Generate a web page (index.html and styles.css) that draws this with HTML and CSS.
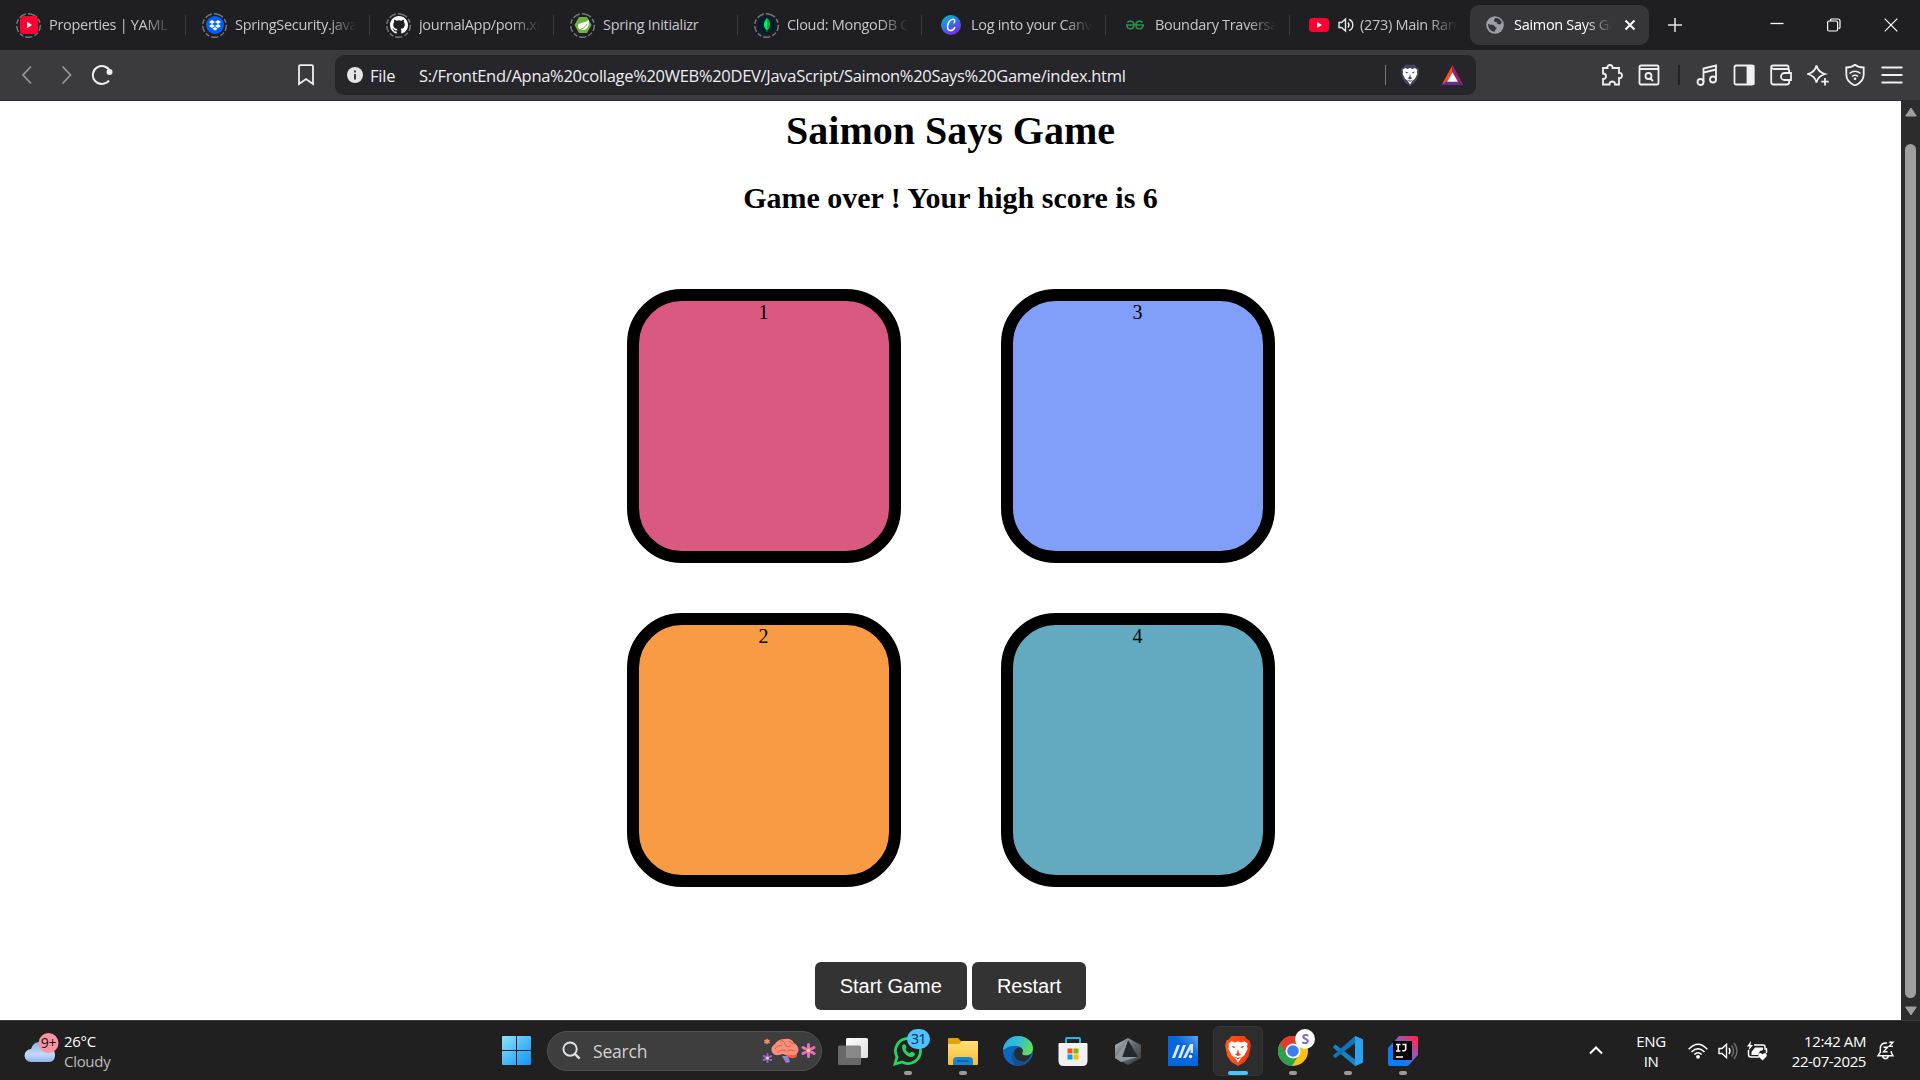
FILE: index.html
```html
<!DOCTYPE html>
<html lang="en">
<head>
<meta charset="utf-8">
<title>Saimon Says Game</title>
<link rel="stylesheet" href="styles.css">
</head>
<body>
<svg width="0" height="0" class="defs" aria-hidden="true">
  <defs>
    <linearGradient id="gWin" x1="0" y1="0" x2="1" y2="1"><stop offset="0" stop-color="#8be4fb"/><stop offset="1" stop-color="#0f93f5"/></linearGradient>
    <linearGradient id="gCanva" x1="0" y1="0" x2="0.6" y2="1"><stop offset="0" stop-color="#00c4cc"/><stop offset="0.5" stop-color="#2a7be4"/><stop offset="1" stop-color="#7d2ae8"/></linearGradient>
    <linearGradient id="gCloud" x1="0" y1="0" x2="0" y2="1"><stop offset="0" stop-color="#7faeee"/><stop offset="0.6" stop-color="#c5d9f8"/><stop offset="1" stop-color="#8fb4ee"/></linearGradient>
    <linearGradient id="gFolder" x1="0" y1="0" x2="0" y2="1"><stop offset="0" stop-color="#ffe07a"/><stop offset="1" stop-color="#f9bd2b"/></linearGradient>
    <linearGradient id="gEdge" x1="0" y1="0.2" x2="1" y2="0.6"><stop offset="0" stop-color="#2fa8e6"/><stop offset="0.5" stop-color="#35c1d0"/><stop offset="1" stop-color="#67e051"/></linearGradient>
    <linearGradient id="gBlue" x1="0" y1="1" x2="1" y2="0"><stop offset="0.6" stop-color="#0566dd"/><stop offset="1" stop-color="#5aa5ef"/></linearGradient>
    <linearGradient id="gBrave" x1="0" y1="0" x2="1" y2="0"><stop offset="0" stop-color="#ff5a1f"/><stop offset="1" stop-color="#f5330b"/></linearGradient>
    <linearGradient id="gIj" x1="0" y1="1" x2="1" y2="0"><stop offset="0.3" stop-color="#087cfa"/><stop offset="0.6" stop-color="#8a5bc4"/><stop offset="0.9" stop-color="#fe2857"/></linearGradient>
    <linearGradient id="gTask" x1="0" y1="0" x2="1" y2="1"><stop offset="0" stop-color="#fff"/><stop offset="1" stop-color="#dedede"/></linearGradient>
    <linearGradient id="gStone" x1="0" y1="0" x2="1" y2="1"><stop offset="0" stop-color="#b9bec5"/><stop offset="0.5" stop-color="#5f666e"/><stop offset="1" stop-color="#343a40"/></linearGradient>
    <symbol id="ring" viewBox="0 0 24 24"><circle cx="12" cy="12" r="11.3" fill="none" stroke="#77777c" stroke-width="1.4" stroke-dasharray="7 2 4 2 6 2 4.5 2"  transform="rotate(-80 12 12)"/></symbol>
    <symbol id="yt" viewBox="0 0 18 18"><rect width="18" height="18" rx="4" fill="#ff0033"/><path d="M7 5.8v6.4l5-3.2z" fill="#fff"/></symbol>
    <symbol id="lion" viewBox="0 0 24 28"><path d="M3 7l3-2 3 1 3-1 3 1 3-1 3 2-.6 3 .6 2-3 6-3 2.4-3 4.6-3-4.6L6 18l-3-6 .6-2z" fill="#fff"/><path d="M6 9l4 1.300-2 1.200zM18 9l-4 1.300 2 1.200zM12 12l1 4 2 1-3 2-3-2 2-1z M8 19l4 1.500 4-1.500-4 3z" fill="currentColor"/></symbol>
  </defs>
</svg>

<header class="tabs">
  <div class="tab">
    <span class="fav"><svg class="ring"><use href="#ring"/></svg><svg class="core"><use href="#yt"/></svg></span>
    <span class="title fade">Properties | YAML | Spring</span>
  </div>
  <div class="tab">
    <span class="fav"><svg class="ring"><use href="#ring"/></svg><svg class="core" viewBox="0 0 18 18"><circle cx="9" cy="9" r="9" fill="#0061fe"/><path d="M6 4l3 2-3 2-3-2zM12 4l3 2-3 2-3-2zM6 8l3 2-3 2-3-2zM12 8l3 2-3 2-3-2zM9 11l2.700 1.700L9 14.400l-2.700-1.700z" fill="#fff"/></svg></span>
    <span class="title fade">SpringSecurity.java - Dropbox</span>
  </div>
  <div class="tab">
    <span class="fav"><svg class="ring"><use href="#ring"/></svg><svg class="core" viewBox="0 0 16 16"><path fill="#fff" d="M8 0C3.580 0 0 3.580 0 8c0 3.540 2.290 6.530 5.470 7.590.4.070.55-.17.55-.38v-1.490c-2.010.37-2.530-.49-2.690-.94-.09-.23-.48-.94-.82-1.130-.28-.15-.68-.52-.01-.53.63-.01 1.080.58 1.230.82.72 1.210 1.870.87 2.330.66.07-.52.28-.87.51-1.070-1.780-.2-3.640-.89-3.640-3.950 0-.87.31-1.590.82-2.150-.08-.2-.36-1.020.08-2.120 0 0 .67-.21 2.200.82a7.600 7.600 0 0 1 4 0c1.530-1.040 2.200-.82 2.200-.82.44 1.100.16 1.920.08 2.120.51.56.82 1.270.82 2.150 0 3.070-1.870 3.750-3.650 3.950.29.25.54.73.54 1.480v2.200c0 .21.15.46.55.38A8 8 0 0 0 16 8c0-4.420-3.580-8-8-8z"/></svg></span>
    <span class="title fade">journalApp/pom.xml at main</span>
  </div>
  <div class="tab">
    <span class="fav"><svg class="ring"><use href="#ring"/></svg><svg class="core" viewBox="0 0 18 18"><path d="M5 1h8l4.500 8L13 17H5L.5 9z" fill="#6db33f"/><path d="M14.500 3.500c1.500 7-2 11-6 10.500-2.500 0-4.500-1.500-4.500-4C4 5.500 12 8 14.500 3.500z" fill="#fff"/><path d="M4 14c4-.5 7-2.500 9-6" stroke="#6db33f" fill="none"/></svg></span>
    <span class="title">Spring Initializr</span>
  </div>
  <div class="tab">
    <span class="fav"><svg class="ring"><use href="#ring"/></svg><svg class="core" viewBox="0 0 18 18"><circle cx="9" cy="9" r="9" fill="#001e2b"/><path d="M9 2c4 4.500 4 9 .3 12v2h-.6v-2C5 11 5 6.500 9 2z" fill="#00ed64"/><path d="M9 2c4 4.500 4 9 .3 12z" fill="#00a849"/></svg></span>
    <span class="title fade">Cloud: MongoDB Cloud</span>
  </div>
  <div class="tab">
    <span class="fav"><svg class="core wide" viewBox="0 0 20 20"><circle cx="10" cy="10" r="10" fill="url(#gCanva)"/><path d="M13 7.800c1.400-1.600.8-3.500-1-3.500-3 0-5.500 4-5.500 7.300 0 2.700 1.300 4 3 4 1.800 0 3.300-1.200 4.200-3" fill="none" stroke="#fff" stroke-width="1.500" stroke-linecap="round"/></svg></span>
    <span class="title fade">Log into your Canva account</span>
  </div>
  <div class="tab">
    <span class="fav"><svg class="core" viewBox="0 0 18 18" fill="none" stroke="#2f8d46" stroke-width="1.600"><path d="M0 9h18M1.200 6.500C4 4 8 5 8 9c0 5-6.800 5-7 .5M16.800 6.500C14 4 10 5 10 9c0 5 6.800 5 7 .5"/></svg></span>
    <span class="title fade">Boundary Traversal of binary</span>
  </div>
  <div class="tab last">
    <span class="fav"><svg class="core wide" viewBox="0 0 20 20"><rect y="3" width="20" height="14" rx="3.500" fill="#ff0033"/><path d="M8 7v6l5-3z" fill="#fff"/></svg></span>
    <svg class="speaker" viewBox="0 0 16 16" fill="none" stroke="#e8e8ea" stroke-width="1.400"><path d="M1 5.500h2.500L7.500 2v12l-4-3.500H1zM10 5.500q2 2.500 0 5M11 2.500c5 1.500 5 9.500 0 11"/></svg>
    <span class="title fade">(273) Main Rang Sharbaton</span>
  </div>
  <div class="tab active">
    <svg class="globe" viewBox="0 0 18 18"><circle cx="9" cy="9" r="8.800" fill="#9aa0a6"/><path d="M9 2.200c3-.5 5.800 1.500 6.800 4.300-1.500 2.500-2 2-4 1.800-1.500-1 0-2-1.600-2.300-2-.3-3-.7-1.200-3.800zM2 8c2 1.200 5.500 0 6.500 2s2 .5 2.200 2.500c-1 .5-1.700 1.500-2 3.200C4.500 15.500 2 12 2 8z" fill="#35353a"/></svg>
    <span class="title fade">Saimon Says Game</span>
    <svg class="close" viewBox="0 0 12 12"><path d="M1.500 1.500l9 9M10.500 1.500l-9 9" stroke="#fff" stroke-width="1.900"/></svg>
  </div>
  <svg class="plus" viewBox="0 0 14 14"><path d="M7 0v14M0 7h14" stroke="#e6e6e8" stroke-width="1.500"/></svg>
  <div class="winctl">
    <svg viewBox="0 0 14 14"><path d="M.5 5.500h13" stroke="#fff" stroke-width="1.300"/></svg>
    <svg viewBox="0 0 14 14" fill="none" stroke="#fff" stroke-width="1.200"><rect x=".6" y="3" width="10" height="10" rx="1.500"/><path d="M3.500 3V2q0-1 1.200-1H11q2 0 2 2v6.500q0 1-1.500 1"/></svg>
    <svg viewBox="0 0 14 14"><path d="M.7.7l12.600 12.600M13.300.7L.7 13.300" stroke="#fff" stroke-width="1.200"/></svg>
  </div>
</header>

<nav class="toolbar">
  <svg class="nav-i dim" viewBox="0 0 20 20"><path d="M13 1.500L5 10l8 8.500"/></svg>
  <svg class="nav-i dim" viewBox="0 0 20 20"><path d="M6.500 1.500l8 8.500-8 8.500"/></svg>
  <svg class="nav-i reload" viewBox="0 0 22 22"><path d="M19.500 8.500A9 9 0 1 0 18 16.500" stroke-width="2"/><circle cx="18.500" cy="8" r="3" fill="#f0f0f2" stroke="none"/></svg>
  <svg class="bookmark" viewBox="0 0 18 22"><path d="M2 2.500q0-1.300 1.300-1.300h11.400Q16 1.200 16 2.500V20l-7-5-7 5z"/></svg>
  <div class="urlbar">
    <svg class="info" viewBox="0 0 16 16"><circle cx="8" cy="8" r="8" fill="#e4e4e9"/><path d="M8 3.500v2M8 7v5.500" stroke="#28272d" stroke-width="1.800"/></svg>
    <span class="scheme">File</span>
    <span class="url">S:/FrontEnd/Apna%20collage%20WEB%20DEV/JavaScript/Saimon%20Says%20Game/index.html</span>
    <i class="bar"></i>
    <svg class="shield" viewBox="0 0 24 28"><path d="M6 1h12l2 3 2.500 1.500L23 9l-2 9-4 5.500-5 4-5-4L3 18 1 9l.5-3.500L4 4z" fill="#44475c"/><use href="#lion"/></svg>
    <svg class="bat" viewBox="0 0 24 22"><path d="M12 0L0 22l5.500-3L12 8z" fill="#ff4724"/><path d="M12 0l12 22-5.500-3L12 8z" fill="#9e1f63"/><path d="M0 22h24l-5.500-4h-13z" fill="#662d91"/><path d="M12 8l6 10.500H6z" fill="#fff"/></svg>
  </div>
  <div class="tools">
    <svg viewBox="0 0 22 22"><path d="M2 4h4.500C5.500 0 12.500 0 11.500 4H18v5c4-1 4 6 0 5v6.500h-4c.5-4-6-4-5.500 0H2v-5.500c4 0 4-5.500 0-5.500z"/></svg>
    <svg viewBox="0 0 22 22"><path d="M3 1.500h16q1.500 0 1.500 1.500v16q0 1.500-1.500 1.500H3q-1.500 0-1.500-1.500V3Q1.500 1.500 3 1.500zM1.500 5h19"/><circle cx="10.500" cy="12" r="3"/><path d="M12.500 14.500l2.500 2.500"/></svg>
    <i class="split"></i>
    <svg viewBox="0 0 22 22"><circle cx="4.500" cy="18" r="3"/><circle cx="17" cy="15.500" r="3"/><path d="M7.500 18V4.500L20 1.500v14M7.500 8.500L20 5.500"/></svg>
    <svg viewBox="0 0 22 22"><rect x="1.500" y="1.500" width="19" height="19" rx="1.500"/><path d="M14.500 2h6v18h-6z" fill="#f0f0f2"/></svg>
    <svg viewBox="0 0 22 22"><path d="M18.500 5V3q0-1.500-1.500-1.500H3Q1.200 1.500 1.200 3.300V18q0 2.500 2.500 2.500h13q2.500 0 2.500-2.500v-2M1.500 3.500Q2 5 4 5h13.200q2 0 2 2v2M21 9h-6.500a3.500 3.500 0 0 0 0 7H21z"/></svg>
    <svg viewBox="0 0 22 22"><path d="M9.500 1.500q1.500 6.500 8.500 8.500-7 2-8.500 8.500Q8 12 1 10q7-2 8.500-8.500zM18 14v7.500M14.300 17.700h7.400"/></svg>
    <svg viewBox="0 0 22 22"><path d="M11 .8c2.500 2 5.500 2.700 8.700 2.700v7c0 5-3.500 8.800-8.700 11-5.200-2.200-8.700-6-8.700-11v-7C5.500 3.500 8.500 2.800 11 .8z"/><path d="M5.500 9.500q5.500-4.500 11 0M8 12.500q3-2.500 6 0" stroke-width="1.600"/><circle cx="11" cy="14.800" r="1.300" fill="#f0f0f2" stroke="none"/></svg>
    <svg viewBox="0 0 22 22"><path d="M.5 3.500h21M.5 11h21M.5 18.500h21"/></svg>
  </div>
</nav>

<main class="viewport">
  <section class="page">
    <h1>Saimon Says Game</h1>
    <h2>Game over ! Your high score is 6</h2>
    <div class="board">
      <div class="pad red">1</div>
      <div class="pad blue">3</div>
      <div class="pad orange">2</div>
      <div class="pad teal">4</div>
    </div>
    <div class="actions"><button>Start Game</button><button>Restart</button></div>
  </section>
  <aside class="scroll">
    <svg viewBox="0 0 12 10"><path d="M6 1l5.300 8H.7z" fill="#9f9f9f" stroke="#9f9f9f" stroke-linejoin="round"/></svg>
    <i class="thumb"></i>
    <svg viewBox="0 0 12 10"><path d="M6 9l5.300-8H.7z" fill="#9f9f9f" stroke="#9f9f9f" stroke-linejoin="round"/></svg>
  </aside>
</main>

<footer class="taskbar">
  <div class="weather">
    <svg viewBox="0 0 36 32"><path d="M7 29a6.500 6.500 0 0 1 0-13q2.500-8 9.500-7 6 0 7.500 6 7 0 7 7t-6 7z" fill="url(#gCloud)"/><circle cx="24.500" cy="10" r="10" fill="#fb93a0"/><text x="24.500" y="15" text-anchor="middle" class="b9">9+</text></svg>
    <div><p>26°C</p><p class="muted">Cloudy</p></div>
  </div>
  <div class="center">
    <svg class="win" viewBox="0 0 29 29" fill="url(#gWin)"><path d="M1 0h13v14H0V1q0-1 1-1zM15 0h13q1 0 1 1v13H15zM0 15h14v14H1q-1 0-1-1zM15 15h14v13q0 1-1 1H15z"/></svg>
    <div class="search">
      <svg class="mag" viewBox="0 0 20 20" fill="none" stroke="#dfe2e6" stroke-width="2"><circle cx="8.500" cy="8.500" r="7"/><path d="M13.500 13.500l5 5" stroke-width="2.500"/></svg>
      <span>Search</span>
      <svg class="brain" viewBox="0 0 54 26"><path d="M20 18l6 0 2 6-4 1z" fill="#8f86cf"/><path d="M23 15h11q3 4-2 5-7 1-9-5z" fill="#f15a40"/><path d="M10 14q-2-5 3-8 3-5 10-5 6-1 9 4 6 4 4 9-2 4-7 3-5 1-8-1-9 3-11-2z" fill="#f98f7b"/><path d="M13 11q3-5 7-3M18 3q4-1 5 3t6 2M15 15q5-5 9-2M25 13q4-2 8 0M27 3q3 3 6 3" stroke="#d9604f" fill="none"/><g stroke-width="3" stroke-linecap="round"><path d="M46.500 6.500v12M41 9.500l11 6M52 9.500l-11 6" stroke="#e670c0"/><path d="M5.500 16v8M1.800 18l7.400 4M9.200 18l-7.400 4" stroke="#9064dc" stroke-width="2"/><path d="M5 1.500v4M3 2.500l4 2M7 2.500l-4 2" stroke="#f08b66" stroke-width="1.700"/></g><circle cx="46.500" cy="12.500" r="1.800" fill="#ffd65a"/><circle cx="5.500" cy="20" r="1.500" fill="#ffd65a"/></svg>
    </div>
    <div class="apps">
      <div class="app"><svg viewBox="0 0 30 30"><rect x="8" y="2" width="22" height="20" rx="1.500" fill="url(#gTask)"/><rect x="0" y="9.500" width="23" height="19.500" rx="1.500" fill="#777" fill-opacity=".85"/></svg></div>
      <div class="app"><svg viewBox="0 0 30 30"><path d="M2 28l2-7a12.500 12.500 0 1 1 5 5z" fill="none" stroke="#25d366" stroke-width="2.800"/><path d="M9.500 9c1-1.500 3-1 3.500 1 1 2-.5 2.500-.5 3.500 1 2 2.500 3 4 3.800 1-.3 1.500-2 3-1.300 3 1 3 2 1.500 4-5 4-14-5-11.500-11z" fill="#25d366"/></svg><b class="badge">31</b><i class="run"></i></div>
      <div class="app"><svg viewBox="0 0 30 30"><path d="M0 3q0-1 1-1h9l3 3h16q1 0 1 1v6H0z" fill="#e1a30d"/><path d="M0 8h11l3-3h15q1 0 1 1v22q0 1-1 1H1q-1 0-1-1z" fill="url(#gFolder)"/><path d="M5 29v-4q0-4 4-4h12q4 0 4 4v4z" fill="#1684d8"/><path d="M9 25h12" stroke="#0b5aa5" stroke-width="1.500"/></svg><i class="run"></i></div>
      <div class="app"><svg viewBox="0 0 30 30"><circle cx="15" cy="15" r="15" fill="#0d66bd"/><path d="M0 14A15 15 0 0 1 15 0c9 0 15 6 15 12 0 5-3.500 7.500-7 7.500s-5-1-3.500-3c1.500-4-2-6.500-6-6.500C7 9 2 13 0 14z" fill="url(#gEdge)"/><path d="M11 17c0-3 2-5 4-5.500 4-.5 5.500 2.500 4.500 4.500-1.200 2 .5 3.500 3.500 3.500 2 0 4-.6 5.500-2-2 8-10 11-17 7z" fill="#272c33"/><path d="M11 15c-1 7 5 11.500 11 10.500 3-.6 4.500-2 6-3.800C25 27 20 30 15 30 8 28 7 19 11 15z" fill="#164f94"/></svg></div>
      <div class="app"><svg viewBox="0 0 30 30"><path d="M8 8V3q0-1 1-1h12q1 0 1 1v5" fill="none" stroke="#29b4e8" stroke-width="2"/><path d="M.5 8q0-1 1-1h27q1 0 1 1v17q0 5-5 5h-19q-5 0-5-5z" fill="#f1f1f1"/><path d="M9.500 12.500h5v5h-5z" fill="#f25022"/><path d="M15.500 12.500h5v5h-5z" fill="#7fba00"/><path d="M9.500 18.500h5v5h-5z" fill="#00a4ef"/><path d="M15.500 18.500h5v5h-5z" fill="#ffb900"/></svg></div>
      <div class="app"><svg viewBox="0 0 30 30"><path d="M15 2l13 7v13l-13 7-13-7V9z" fill="url(#gStone)"/><path d="M15 4l10 17-17 4z" fill="#24272b"/><path d="M15 4l-6 17 16 0-17 5-6-4z" fill="#92989f"/></svg></div>
      <div class="app"><svg viewBox="0 0 30 30"><path d="M0 0h30v30H0z" fill="url(#gBlue)"/><path d="M4 22l5-13h3L7 22zM10 22L15 9h3l-5 13zM15 22l7-14h3v9h-2.500v-4L18 22z" fill="#d9eaff"/><circle cx="22.500" cy="20.500" r="1.700" fill="#fff"/></svg></div>
      <div class="app on"><svg viewBox="0 0 24 28"><path d="M6 0h12l2.500 3L23 4.500 24 9l-2 10-4 5.500-6 3.500-6-3.500L2 19 0 9l1-4.500L3.500 3z" fill="url(#gBrave)"/><use href="#lion"/></svg><i class="run"></i></div>
      <div class="app"><svg viewBox="0 0 30 30"><circle cx="15" cy="15" r="15" fill="#fbc116"/><path d="M15 15L2 7.500A15 15 0 0 1 28 7.500H15z" fill="#e33b2e"/><path d="M2 7.500A15 15 0 0 0 14 30l7-11.500-6-3.500z" fill="#2da04e"/><path d="M2 7.500l7 11L15 8h13A15 15 0 0 0 2 7.500z" fill="#e33b2e"/><circle cx="15" cy="15" r="7.500" fill="#fff"/><circle cx="15" cy="15" r="5.800" fill="#3b7ded"/></svg><b class="badge white">S</b><i class="run"></i></div>
      <div class="app"><svg viewBox="0 0 30 30"><path d="M22 0l8 3.500v23L22 30 0 11.500Q0 10 2.500 8.500L22 23.500z" fill="#1284cb"/><path d="M0 19.500Q0 21 2.500 22L22 7V0z" fill="#0f75bb"/><path d="M22 0l7 3q1 .5 1 1.500v21q0 1-1 1.500l-7 3z" fill="#29a3ed"/></svg><i class="run"></i></div>
      <div class="app"><svg viewBox="0 0 30 30"><path d="M11 0h17q2 0 2 2v17L20 30H2q-2 0-2-2V12z" fill="url(#gIj)"/><path d="M5 5h19v19H5z" fill="#000"/><path d="M8 8.500h4.500M10.200 8.500V15M8 15h4.500M14.500 8.500h3.200V13q0 2-3.500 1.800M8 21h7" stroke="#fff" stroke-width="1.600" fill="none"/></svg><i class="run"></i></div>
    </div>
  </div>
  <div class="tray">
    <svg class="chev" viewBox="0 0 14 9"><path d="M1 7.500l6-6 6 6" fill="none" stroke="#fff" stroke-width="2"/></svg>
    <div class="lang"><p>ENG</p><p>IN</p></div>
    <svg class="wifi" viewBox="0 0 20 16" fill="none" stroke="#fff" stroke-width="1.500"><path d="M.7 6.300q9.300-10 18.600 0M3.500 9q6.500-6.500 13 0M6.300 11.500q3.700-3.500 7.400 0"/><circle cx="10" cy="13.800" r="1.900" fill="#fff" stroke="none"/></svg>
    <svg class="vol" viewBox="0 0 20 18" fill="none" stroke="#fff" stroke-width="1.400"><path d="M1 6.500h3L8.500 2.300v13.400L4 11.500H1zM11 6q2 3 0 6"/><path d="M13.500 3.500q4 5.500 0 11M16 1q6 8 0 16" stroke="#707070"/></svg>
    <svg class="batt" viewBox="0 0 21 20"><path d="M7 4h9q2 0 2 2v2h1.500v4M1.500 9v4.500q0 2.500 2.500 2.500h8" fill="none" stroke="#fff" stroke-width="1.500"/><path d="M8 6.500h8V9l-3 1-2 4H4.500V11z" fill="#fff"/><path d="M4 0L0 5.500h2.500L1.500 9.500 6 4H3.500z" fill="#fff"/><path d="M15.500 19.500l-4-4q-.7-3.500 2-3.500l2 1.300 2-1.300q3 .2 2 3.500z" fill="#fff"/></svg>
    <div class="clock"><p>12:42 AM</p><p>22-07-2025</p></div>
    <svg class="bell" viewBox="0 0 18 19" fill="none" stroke="#fff" stroke-width="1.400"><path d="M10 2Q3.500 1.500 3.300 7.500v3.700L1 14.700h15l-1.700-3.200V10M5.500 15.500q3 4.500 6 0"/><path d="M6.500 6.200h4l-4 4.600h4M12.300 1.200H16l-3.700 4.200H16"/></svg>
  </div>
</footer>
</body>
</html>
```
FILE: styles.css
```css
* { box-sizing: border-box; }
body { margin: 0; width: 1920px; height: 1080px; overflow: hidden; display: flex; flex-direction: column; font-family: "Open Sans", "Noto Sans", sans-serif; color: #fff; }
p { margin: 0; }
svg { display: block; flex: none; }
.defs { position: absolute; }

/* Tab strip */
.tabs { height: 50px; flex: none; background: #1f1e23; display: flex; align-items: center; }
.tab { width: 184px; height: 20px; flex: none; display: flex; align-items: center; padding-left: 16px; padding-right: 13px; border-right: 1px solid #3d3c42; margin-right: 0; }
.tab:first-child { width: 186px; }
.tab.last { border: 0; width: 180px; }
.fav { width: 25px; height: 25px; flex: none; display: grid; place-items: center; margin-right: 8px; }
.fav > svg { grid-area: 1 / 1; }
.ring { width: 25px; height: 25px; }
.core { width: 18px; height: 18px; }
.core.wide { width: 20px; height: 20px; }
.title { flex: 1; min-width: 0; white-space: nowrap; overflow: hidden; font-size: 14.500px; line-height: 24px; letter-spacing: -0.300px; color: #c6c6c9; }
.fade { -webkit-mask-image: linear-gradient(90deg, #000 calc(100% - 28px), transparent); mask-image: linear-gradient(90deg, #000 calc(100% - 28px), transparent); }
.speaker { width: 16px; height: 16px; margin-right: 6px; margin-left: -1px; }
.tab.active { width: 179px; height: 40px; background: #35353a; border: 0; border-radius: 9px; padding-right: 13px; }
.active .title { color: #fff; margin-right: 12px; }
.globe { width: 18px; height: 18px; margin-right: 10px; }
.close { width: 12px; height: 12px; }
.plus { width: 14px; height: 14px; margin-left: 19px; }
.winctl { margin-left: auto; display: flex; gap: 43px; padding-right: 22px; }
.winctl svg { width: 14px; height: 14px; }

/* Toolbar */
.toolbar { height: 51px; flex: none; background: #3b3a3f; border-bottom: 1px solid #2d2b32; display: flex; align-items: center; padding-left: 18px; }
.toolbar svg { fill: none; stroke: #f0f0f2; stroke-width: 1.800; }
.nav-i { width: 20px; height: 20px; margin-right: 18px; }
.dim { opacity: .5; }
.nav-i.reload { width: 22px; height: 22px; margin: 0 0 0 -3px; }
.bookmark { width: 18px; height: 22px; margin-left: 184px; }
.urlbar { width: 1141px; height: 40px; margin-left: 20px; border-radius: 9px; background: #26252a; display: flex; align-items: center; padding-left: 12px; font-size: 16.500px; color: #ededf0; }
.urlbar svg { stroke: none; }
.urlbar .info { width: 16px; height: 16px; margin-right: 7px; }
.urlbar .info path { stroke: #28272d; }
.scheme { width: 49px; letter-spacing: -.2px; }
.url { width: 966px; white-space: nowrap; letter-spacing: -.3px; }
.bar { width: 1px; height: 20px; background: #77767c; }
.shield { width: 20px; height: 23px; margin-left: 14px; color: #44475c; }
.bat { width: 23px; height: 20px; margin-left: 21px; }
.tools { margin-left: auto; display: flex; align-items: center; gap: 15px; padding-right: 17px; }
.tools svg { width: 22px; height: 22px; }
.split { width: 2px; height: 20px; background: #232227; margin: 0 1px 0 3px; }

/* Game page */
.viewport { height: 919px; flex: none; display: flex; background: #fff; color: #000; }
.page { width: 1901px; font-family: "Liberation Serif", serif; text-align: center; display: flex; flex-direction: column; align-items: center; padding-top: 7px; }
h1 { margin: 0; font-size: 40px; line-height: 46px; }
h2 { margin: 26px 0 0; font-size: 30px; line-height: 35px; }
.board { margin-top: 74px; display: grid; grid-template-columns: 274px 274px; column-gap: 100px; row-gap: 50px; }
.pad { height: 274px; border: 12px solid #000; border-radius: 20%; font-size: 20px; line-height: 23px; }
.red { background: #d95980; }
.blue { background: #819ff9; }
.orange { background: #f99b45; }
.teal { background: #63aac0; }
.actions { margin-top: 75px; display: flex; gap: 5px; }
button { height: 48px; border: 0; border-radius: 6px; background: #333; color: #fff; font: 20px "Liberation Sans", sans-serif; padding: 0 25px; }
.scroll { width: 19px; background: #2c2c2c; display: flex; flex-direction: column; align-items: center; padding: 6px 0 4px; }
.scroll svg { width: 12px; height: 10px; }
.thumb { width: 11px; flex: 1; margin: 27px 0 8px; border-radius: 6px; background: #9f9f9f; }

/* Taskbar */
.taskbar { height: 60px; flex: none; background: #202020; border-top: 1px solid #3a3a3a; display: flex; align-items: center; font-size: 15px; line-height: 20px; }
.weather { display: flex; width: 502px; padding-left: 24px; gap: 4px; letter-spacing: -.3px; }
.weather svg { width: 36px; height: 32px; margin-top: 2px; }
.b9 { font-size: 14px; fill: #111; }
.muted { color: #bdbdbd; }
.center { display: flex; align-items: center; }
.win { width: 29px; height: 29px; }
.search { width: 275px; height: 40px; margin-left: 16px; border-radius: 20px; background: #3e3e3e; border: 1px solid #525252; display: flex; align-items: center; padding: 0 5px 0 14px; font-size: 17.500px; color: #d2d2d2; letter-spacing: -.2px; }
.mag { width: 19px; height: 19px; margin-right: 12px; }
.brain { width: 54px; height: 26px; margin-left: auto; }
.apps { display: flex; gap: 5px; margin-left: 6px; }
.app { position: relative; width: 50px; height: 50px; border-radius: 6px; display: grid; place-items: center; }
.app svg { width: 30px; height: 30px; }
.app.on { background: #2d2d2d; border: 1px solid #363636; color: #f9431a; }
.run { position: absolute; bottom: 1px; left: 21px; width: 8px; height: 4px; border-radius: 2px; background: #9a9a9a; }
.on .run { left: 14px; bottom: 0; width: 20px; background: #4cc2ff; }
.badge { position: absolute; right: 3px; top: 3px; width: 23px; height: 20px; border-radius: 10px; background: #4cc2ff; color: #06243a; font-weight: 400; font-size: 14px; line-height: 20px; text-align: center; letter-spacing: -.5px; }
.badge.white { width: 20px; background: #fff; color: #7e6fb5; font-weight: 700; }
.tray { margin-left: auto; display: flex; align-items: center; padding-right: 25px; }
.tray p { letter-spacing: -.4px; }
.chev { width: 14px; height: 9px; }
.lang { width: 50px; margin-left: 23px; text-align: center; }
.wifi { width: 20px; height: 16px; margin-left: 12px; }
.vol { width: 20px; height: 18px; margin-left: 10px; }
.batt { width: 21px; height: 20px; margin-left: 9px; }
.clock { width: 98px; text-align: right; margin-left: 0; white-space: nowrap; }
.bell { width: 18px; height: 19px; margin-left: 11px; }
```
